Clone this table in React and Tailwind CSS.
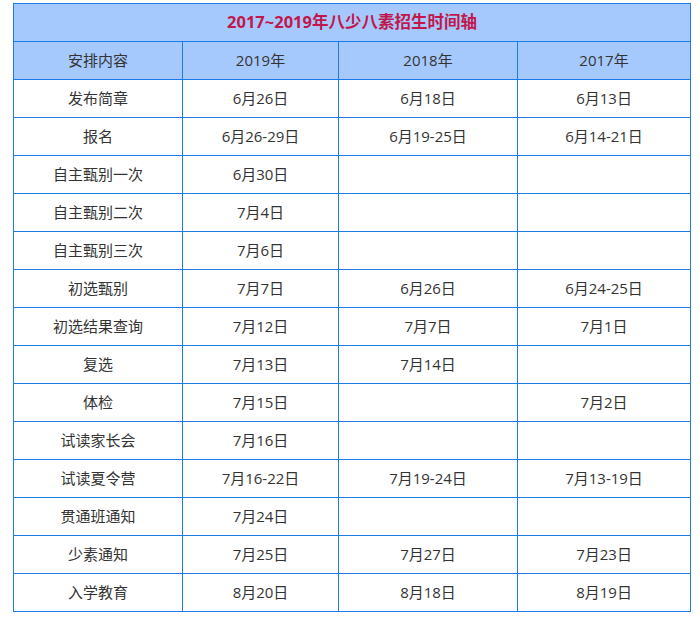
import React from 'react';

const rows = [
  ['发布简章', '6月26日', '6月18日', '6月13日'],
  ['报名', '6月26-29日', '6月19-25日', '6月14-21日'],
  ['自主甄别一次', '6月30日', '', ''],
  ['自主甄别二次', '7月4日', '', ''],
  ['自主甄别三次', '7月6日', '', ''],
  ['初选甄别', '7月7日', '6月26日', '6月24-25日'],
  ['初选结果查询', '7月12日', '7月7日', '7月1日'],
  ['复选', '7月13日', '7月14日', ''],
  ['体检', '7月15日', '', '7月2日'],
  ['试读家长会', '7月16日', '', ''],
  ['试读夏令营', '7月16-22日', '7月19-24日', '7月13-19日'],
  ['贯通班通知', '7月24日', '', ''],
  ['少素通知', '7月25日', '7月27日', '7月23日'],
  ['入学教育', '8月20日', '8月18日', '8月19日'],
];

const cell = 'border border-[#1c7ce6] h-[38px] p-0 text-center align-middle';

export default function App() {
  return (
    <div className="w-[700px] h-[620px] bg-white pt-[3px] pl-[13px] font-['Open_Sans','Noto_Sans_CJK_SC',sans-serif] text-[15px] text-[#333]">
      <table className="w-[677px] border-collapse table-fixed">
        <colgroup>
          <col className="w-[169px]" />
          <col className="w-[156px]" />
          <col className="w-[179px]" />
          <col className="w-[173px]" />
        </colgroup>
        <thead>
          <tr className="bg-[#a6c9fd]">
            <th colSpan={4} className={`${cell} text-[16.5px] font-bold text-[#c1174c]`}>
              2017~2019年八少八素招生时间轴
            </th>
          </tr>
          <tr className="bg-[#a6c9fd]">
            <td className={cell}>安排内容</td>
            <td className={cell}>2019年</td>
            <td className={cell}>2018年</td>
            <td className={cell}>2017年</td>
          </tr>
        </thead>
        <tbody>
          {rows.map((r) => (
            <tr key={r[0]}>
              {r.map((c, i) => (
                <td key={i} className={cell}>{c}</td>
              ))}
            </tr>
          ))}
        </tbody>
      </table>
    </div>
  );
}
